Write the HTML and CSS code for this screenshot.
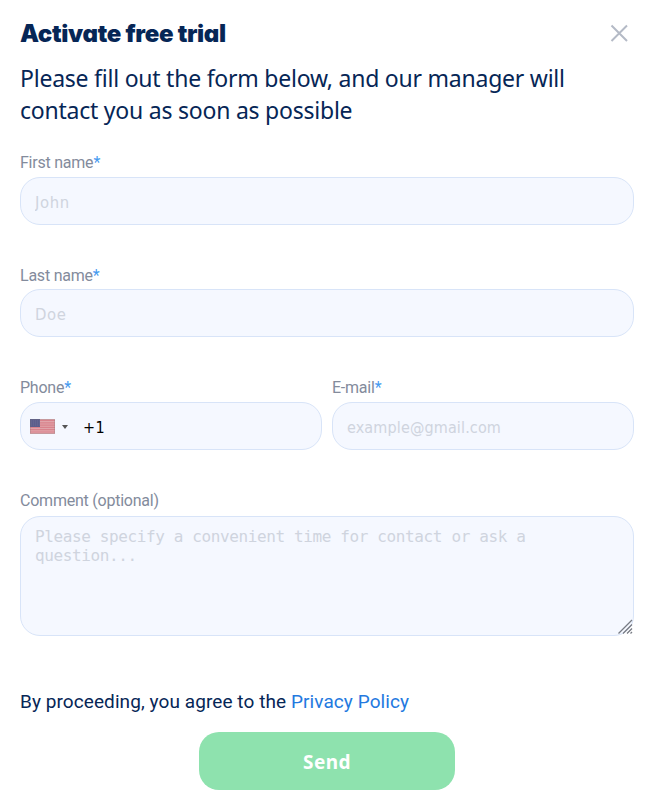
FILE: index.html
```html
<!DOCTYPE html>
<html lang="en">
<head>
<meta charset="utf-8">
<title>Activate free trial</title>
<link rel="stylesheet" href="styles.css">
</head>
<body>
<form class="modal">
  <header class="header">
    <h1 class="title">Activate free trial</h1>
    <svg class="close" width="18" height="18" viewBox="0 0 18 18"><path d="M1.5 1.5L17 17M17 1.5L1.5 17"/></svg>
  </header>
  <p class="intro">Please fill out the form below, and our manager will<br>contact you as soon as possible</p>
  <div class="field first">
    <label class="label" for="first">First name<span class="star">*</span></label>
    <input class="input name" id="first" placeholder="John">
  </div>
  <div class="field last">
    <label class="label" for="last">Last name<span class="star">*</span></label>
    <input class="input name" id="last" placeholder="Doe">
  </div>
  <div class="row">
    <div class="field">
      <label class="label" for="phone">Phone<span class="star">*</span></label>
      <div class="input phone">
        <svg class="flag" width="25" height="15" viewBox="0 0 25 15">
          <rect width="25" height="15" fill="#e0a4aa"/>
          <path d="M0 1.5H25M0 3.8H25M0 6.1H25M0 8.4H25M0 10.7H25M0 13H25" stroke="#d9828c" stroke-width="1.2"/>
          <rect width="10" height="8" fill="#5d5d8b"/>
          <path d="M1 2H10M1 4H10M1 6H10" stroke="#77779e" stroke-width=".6" stroke-dasharray="1 1"/>
          <rect x=".5" y=".5" width="24" height="14" fill="none" stroke="#777" stroke-opacity=".25"/>
        </svg>
        <span class="caret"></span>
        <input class="phone-input" id="phone" value="+1">
      </div>
    </div>
    <div class="field">
      <label class="label" for="email">E-mail<span class="star">*</span></label>
      <input class="input email" id="email" placeholder="example@gmail.com">
    </div>
  </div>
  <div class="field comment">
    <label class="label" for="comment">Comment (optional)</label>
    <textarea class="input area" id="comment" placeholder="Please specify a convenient time for contact or ask a question..."></textarea>
    <svg class="grip" width="15" height="15" viewBox="0 0 15 15"><path d="M0.5 14.5L14 1M5 14.5L14 5.5M9 14.5L14 9.5M12.5 14.5L14 13"/></svg>
  </div>
  <p class="policy">By proceeding, you agree to the <a class="link">Privacy Policy</a></p>
  <button class="send" type="button">Send</button>
</form>
</body>
</html>
```

FILE: styles.css
```css
* { box-sizing: border-box; }
body { margin: 0; background: #fff; color: #062656; font-family: Roboto, sans-serif; }
.modal { width: 652px; height: 806px; padding: 18px 18px 0 20px; overflow: hidden; }
.header { display: flex; justify-content: space-between; height: 44px; padding-right: 6px; }
.title { margin: 0; font: 900 24px/32px Inter, sans-serif; font-feature-settings: "cv11"; letter-spacing: -0.3px; white-space: nowrap; }
.close { margin-top: 6px; fill: none; stroke: #b4bac6; stroke-width: 2; }
.intro { margin: 0 0 20px; height: 64px; font: 23px/32px "Noto Sans", sans-serif; letter-spacing: -0.23px; white-space: nowrap; }
.field { position: relative; height: 113px; padding-top: 6px; }
.first { height: 112px; }
.label { display: block; height: 25px; padding-top: 1px; font-size: 16px; line-height: 19px; letter-spacing: -0.23px; color: #838b9c; }
.last .label { padding-top: 2px; }
.star { color: #459af0; }
.input { display: block; width: 100%; height: 48px; margin: 0; padding: 1px 14px 0; border: 1px solid #d8e4f8; border-radius: 20px; outline: 0; background: #f5f8ff; font: 16px "DejaVu Sans Condensed", "DejaVu Sans", sans-serif; }
.input::placeholder { color: #cfd4de; opacity: 1; }
.name { padding-top: 3px; font-size: 16.5px; letter-spacing: 0.6px; }
.email { padding-top: 2px; letter-spacing: 0.14px; }
.row { display: grid; grid-template-columns: 302px 302px; gap: 10px; }
.phone { display: flex; align-items: center; padding-left: 9px; }
.caret { margin: 0 15px 0 7px; border: 3px solid transparent; border-top: 4px solid #555; border-bottom: 0; }
.phone-input { width: 180px; padding: 1px 0 0; border: 0; outline: 0; background: none; color: #000; font: inherit; letter-spacing: 0.5px; }
.comment { height: 206px; }
.area { height: 120px; margin-top: 1px; padding: 10px 14px; resize: none; font: 16px/19px "DejaVu Sans Mono", monospace; letter-spacing: -0.38px; }
.grip { position: absolute; right: 1px; top: 135px; fill: none; stroke: #777b84; stroke-width: 1.3; }
.policy { margin: 0 0 18px; font-size: 19px; line-height: 24px; letter-spacing: 0.08px; white-space: nowrap; }
.link { color: #2379df; }
.send { display: block; width: 256px; height: 58px; margin: 0 auto; padding: 1px 0 0; border: 0; border-radius: 20px; background: #8ee2ae; color: #fff; font: bold 19px "Noto Sans", sans-serif; letter-spacing: 0.5px; }
```
